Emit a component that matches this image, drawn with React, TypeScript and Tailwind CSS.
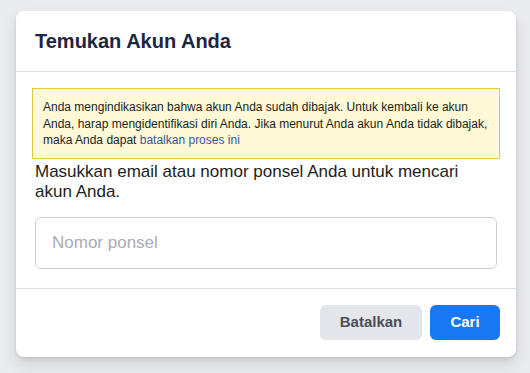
export default function App() {
  return (
    <div className="min-h-screen bg-[#e9ebee] pt-[11px] pl-4 font-['Liberation_Sans',Arial,sans-serif]">
      <div className="w-[500px] rounded-lg bg-white shadow-[0_2px_4px_rgba(0,0,0,0.1),0_8px_16px_rgba(0,0,0,0.1)]">
        <div className="flex h-[61px] items-center border-b border-[#dadde1] px-[19px]">
          <h2 className="text-[20px] font-bold text-[#1c2541]">Temukan Akun Anda</h2>
        </div>
        <div className="px-4 pt-4">
          <div className="border border-[#e1c84b] bg-[#fff9d7] px-[10px] pt-[10px] pb-[9px] text-[12px] leading-[16.5px] text-[#1c1e21]">
            Anda mengindikasikan bahwa akun Anda sudah dibajak. Untuk kembali ke akun Anda, harap
            mengidentifikasi diri Anda. Jika menurut Anda akun Anda tidak dibajak, maka Anda dapat{' '}
            <a className="text-[#385898]">batalkan proses ini</a>
          </div>
          <p className="px-[3px] pt-[3px] text-[17px] leading-[20px] text-[#1c1e21]">
            Masukkan email atau nomor ponsel Anda untuk mencari akun Anda.
          </p>
          <div className="px-[3px] pt-[15px] pb-[19px]">
            <input
              placeholder="Nomor ponsel"
              className="block h-[52px] w-full rounded-md border border-[#ccd0d5] px-4 text-[17px] text-[#1c1e21] outline-none placeholder:text-[#a8adb4]"
            />
          </div>
        </div>
        <div className="flex justify-end gap-2 border-t border-[#dadde1] px-4 pt-4 pb-[17px]">
          <button className="h-[35px] w-[102px] rounded-md bg-[#e4e6eb] text-[15px] font-bold text-[#4b4f56]">
            Batalkan
          </button>
          <button className="h-[35px] w-[70px] rounded-md bg-[#1877f2] text-[15px] font-bold text-white">
            Cari
          </button>
        </div>
      </div>
    </div>
  );
}
